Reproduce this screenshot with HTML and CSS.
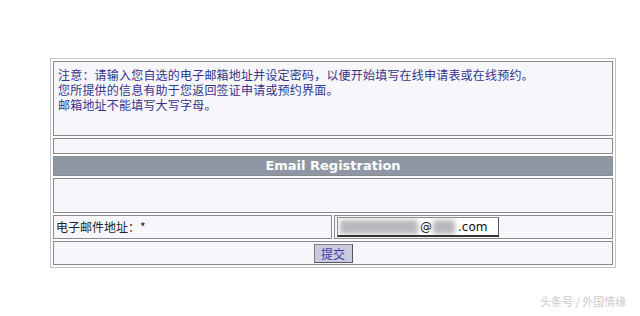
FILE: index.html
```html
<!DOCTYPE html>
<html>
<head>
<meta charset="utf-8">
<link rel="stylesheet" href="styles.css">
</head>
<body>
<div class="page">
  <table class="frame">
    <tr>
      <td colspan="2" class="notice">
        <div class="line">注意：请输入您自选的电子邮箱地址并设定密码，以便开始填写在线申请表或在线预约。</div>
        <div class="line">您所提供的信息有助于您返回签证申请或预约界面。</div>
        <div class="line">邮箱地址不能填写大写字母。</div>
      </td>
    </tr>
    <tr><td colspan="2" class="spacer"></td></tr>
    <tr><td colspan="2" class="header">Email Registration</td></tr>
    <tr><td colspan="2" class="blank"></td></tr>
    <tr>
      <td class="label">电子邮件地址：*</td>
      <td class="field">
        <div class="input"><span class="blur blur-a"></span><span class="at">@</span><span class="blur blur-b"></span><span class="dom">.com</span></div>
      </td>
    </tr>
    <tr>
      <td colspan="2" class="actions"><button class="submit">提交</button></td>
    </tr>
  </table>
  <div class="watermark">头条号 / 外国情缘</div>
</div>
</body>
</html>
```
FILE: styles.css
```css
html, body {
  margin: 0;
  padding: 0;
  background: #ffffff;
}
.page {
  position: relative;
  width: 640px;
  height: 316px;
  padding: 58px 0 0 50px;
  box-sizing: border-box;
  font-family: "Noto Sans CJK SC", "DejaVu Sans", sans-serif;
  font-size: 12px;
}
.frame {
  width: 566px;
  border: 1px solid #c4c4c8;
  border-spacing: 2px;
  border-collapse: separate;
  table-layout: fixed;
  background: #ffffff;
}
.frame td {
  border: 1px solid #8a8a8e;
  background: #f7f7fb;
  padding: 0;
}
.notice {
  height: 68px;
  vertical-align: top;
  padding: 5px 0 0 4px !important;
  color: #34348c;
  letter-spacing: 0.2px;
}
.line {
  height: 15px;
  line-height: 15px;
  white-space: nowrap;
}
.spacer { height: 14px; }
.header {
  height: 18px;
  background: #8e97a3 !important;
  color: #ffffff;
  text-align: center;
  font-family: "DejaVu Sans", Verdana, sans-serif;
  font-weight: bold;
  font-size: 13px;
  line-height: 18px;
}
.blank { height: 33px; }
.label {
  height: 22px;
  color: #222222;
  padding-left: 2px !important;
  line-height: 22px;
}
.field { height: 22px; }
.input {
  margin-left: 2px;
  width: 160px;
  height: 17px;
  border: 1px solid #8a8a8a;
  border-bottom: 2px solid #333333;
  border-right: 1px solid #555555;
  background: #ffffff;
  display: flex;
  align-items: center;
  font-family: "DejaVu Sans", sans-serif;
  font-size: 12px;
  color: #111111;
  overflow: hidden;
}
.blur {
  display: inline-block;
  height: 14px;
  background: #b8b8bc;
  filter: blur(2.5px);
}
.blur-a { width: 78px; margin-left: 2px; }
.blur-b { width: 22px; margin-left: 1px; }
.at { margin-left: 2px; }
.dom { margin-left: 3px; }
.actions {
  height: 22px;
  text-align: center;
}
.submit {
  height: 19px;
  width: 39px;
  padding: 0;
  margin-top: 1px;
  border: 1px solid #7e7e86;
  border-right-color: #55555c;
  border-bottom-color: #55555c;
  background: #c9cbdd;
  color: #3c3ca8;
  font-family: "Noto Sans CJK SC", sans-serif;
  font-size: 12px;
  line-height: 16px;
}
.watermark {
  position: absolute;
  left: 540px;
  top: 293px;
  color: #cccccc;
  font-size: 11px;
  font-family: "Noto Sans CJK SC", sans-serif;
}
```
